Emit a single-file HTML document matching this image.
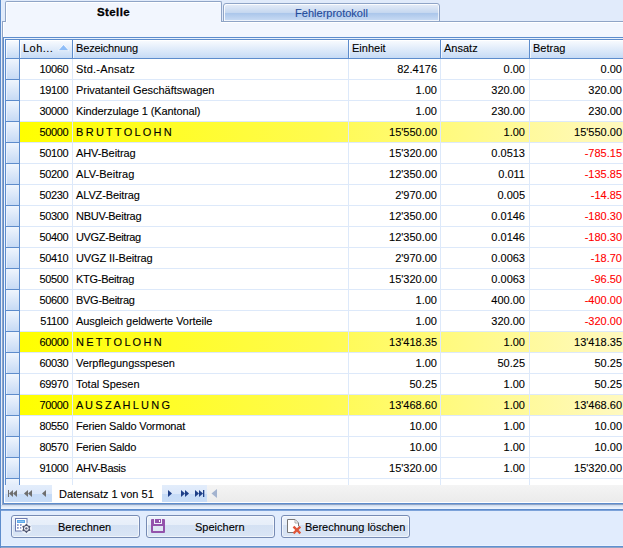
<!DOCTYPE html>
<html><head><meta charset="utf-8"><style>
html,body{margin:0;padding:0}
body{width:623px;height:548px;overflow:hidden;position:relative;background:#e1ebfb;font-family:"Liberation Sans",sans-serif;font-size:11px;color:#000}
.t{position:absolute;white-space:nowrap;line-height:13px;-webkit-text-stroke:0.1px currentColor}
</style></head><body>
<div style="position:absolute;left:0px;top:0px;width:1px;height:548px;background:#5d8ccc"></div><div style="position:absolute;left:1px;top:0px;width:1px;height:509px;background:#e6eefa"></div><div style="position:absolute;left:5px;top:1px;width:215px;height:21px;border:1px solid #8fa4c6;border-bottom:none;border-radius:2px 2px 0 0;background:#f2f6fe;box-shadow:inset 1px 1px 0 #fff"></div><div class="t" style="left:5px;top:6px;width:217px;text-align:center;font-weight:bold;font-size:11.5px;letter-spacing:0.4px;-webkit-text-stroke:0.3px #000">Stelle</div><div style="position:absolute;left:223px;top:3px;width:215px;height:17px;border:1px solid #8fa4c6;border-radius:2px 2px 0 0;border-radius:3px 3px 0 0;background:linear-gradient(#e6edf8 0%,#c6d8f0 50%,#a9c5ea 52%,#cadcf4 100%);box-shadow:inset 1px 1px 0 rgba(255,255,255,0.85),inset -1px -1px 0 rgba(255,255,255,0.7)"></div><div class="t" style="left:223px;top:7px;width:217px;text-align:center;color:#1f4a9a">Fehlerprotokoll</div><div style="position:absolute;left:2px;top:21px;width:3px;height:1px;background:#8fa4c6"></div><div style="position:absolute;left:221px;top:21px;width:402px;height:1px;background:#8fa4c6"></div><div style="position:absolute;left:2px;top:21px;width:1px;height:484px;background:#8fa4c6"></div><div style="position:absolute;left:3px;top:22px;width:620px;height:15px;background:#f2f6fe"></div><div style="position:absolute;left:3px;top:22px;width:1px;height:15px;background:#fff"></div><div style="position:absolute;left:4px;top:22px;width:1px;height:1px;background:#fff"></div><div style="position:absolute;left:221px;top:22px;width:402px;height:1px;background:#fff"></div><div style="position:absolute;left:2px;top:504px;width:621px;height:1px;background:#8fa4c6"></div><div style="position:absolute;left:1px;top:505px;width:622px;height:4px;background:linear-gradient(#c9d8ec,#dce7f5 35%,#eaf1fc 70%,#eff5fd)"></div><div style="position:absolute;left:3px;top:37px;width:620px;height:1px;background:#5d8ccc"></div><div style="position:absolute;left:3px;top:37px;width:1px;height:467px;background:#5d8ccc"></div><div style="position:absolute;left:3px;top:503px;width:620px;height:1px;background:#5d8ccc"></div><div style="position:absolute;left:4px;top:38px;width:619px;height:1px;background:#e8f0fc"></div><div style="position:absolute;left:4px;top:38px;width:1px;height:465px;background:#f0f5fd"></div><div style="position:absolute;left:5px;top:39px;width:618px;height:1px;background:#5d8ccc"></div><div style="position:absolute;left:5px;top:39px;width:1px;height:446px;background:#5d8ccc"></div><div style="position:absolute;left:6px;top:40px;width:617px;height:18px;background:linear-gradient(#fafcff,#c6dbf6)"></div><div style="position:absolute;left:6px;top:40px;width:617px;height:1px;background:#fff"></div><div style="position:absolute;left:5px;top:58px;width:618px;height:1px;background:#5d8ccc"></div><div style="position:absolute;left:19px;top:40px;width:1px;height:18px;background:#5d8ccc"></div><div style="position:absolute;left:20px;top:41px;width:1px;height:17px;background:rgba(255,255,255,0.7)"></div><div style="position:absolute;left:72px;top:40px;width:1px;height:18px;background:#5d8ccc"></div><div style="position:absolute;left:73px;top:41px;width:1px;height:17px;background:rgba(255,255,255,0.7)"></div><div style="position:absolute;left:348px;top:40px;width:1px;height:18px;background:#5d8ccc"></div><div style="position:absolute;left:349px;top:41px;width:1px;height:17px;background:rgba(255,255,255,0.7)"></div><div style="position:absolute;left:440px;top:40px;width:1px;height:18px;background:#5d8ccc"></div><div style="position:absolute;left:441px;top:41px;width:1px;height:17px;background:rgba(255,255,255,0.7)"></div><div style="position:absolute;left:529px;top:40px;width:1px;height:18px;background:#5d8ccc"></div><div style="position:absolute;left:530px;top:41px;width:1px;height:17px;background:rgba(255,255,255,0.7)"></div><div style="position:absolute;left:6px;top:41px;width:1px;height:17px;background:rgba(255,255,255,0.7)"></div><div class="t" style="left:23px;top:42px;letter-spacing:0.45px">Loh...</div><div class="t" style="left:76px;top:42px;letter-spacing:-0.15px">Bezeichnung</div><div class="t" style="left:352px;top:42px;letter-spacing:0px">Einheit</div><div class="t" style="left:444px;top:42px;letter-spacing:0px">Ansatz</div><div class="t" style="left:533px;top:42px;letter-spacing:0px">Betrag</div><svg style="position:absolute;left:57px;top:43px" width="14" height="9"><polyline points="1.5,7.5 6.5,1.5 11.5,7.5" fill="none" stroke="rgba(255,255,255,0.8)" stroke-width="1"/><polygon points="2,7 6.5,2 11,7" fill="#8fbdf7"/></svg><div style="position:absolute;left:6px;top:59px;width:617px;height:426px;overflow:hidden;background:#fff"><div style="position:absolute;left:0px;top:0px;width:13px;height:20px;background:linear-gradient(90deg,#f4f8fe 0,#e2ecfb 1px,#c9dcf6 100%)"></div><div style="position:absolute;left:1px;top:0px;width:12px;height:20px;background:linear-gradient(#eff5fd,#c6daf5)"></div><div style="position:absolute;left:0px;top:20px;width:13px;height:1px;background:#5d8ccc"></div><div style="position:absolute;left:14px;top:20px;width:603px;height:1px;background:#dde9fa"></div><div class="t" style="left:14px;top:4px;width:48.4px;text-align:right;letter-spacing:-0.35px">10060</div><div class="t" style="left:70px;top:4px;letter-spacing:0.190px">Std.-Ansatz</div><div class="t" style="left:343px;top:4px;width:88px;text-align:right">82.4176</div><div class="t" style="left:435px;top:4px;width:84px;text-align:right">0.00</div><div class="t" style="left:524px;top:4px;width:92px;text-align:right;color:#000">0.00</div><div style="position:absolute;left:0px;top:21px;width:13px;height:20px;background:linear-gradient(90deg,#f4f8fe 0,#e2ecfb 1px,#c9dcf6 100%)"></div><div style="position:absolute;left:1px;top:21px;width:12px;height:20px;background:linear-gradient(#eff5fd,#c6daf5)"></div><div style="position:absolute;left:0px;top:41px;width:13px;height:1px;background:#5d8ccc"></div><div style="position:absolute;left:14px;top:41px;width:603px;height:1px;background:#dde9fa"></div><div class="t" style="left:14px;top:25px;width:48.4px;text-align:right;letter-spacing:-0.35px">19100</div><div class="t" style="left:70px;top:25px;letter-spacing:-0.038px">Privatanteil Geschäftswagen</div><div class="t" style="left:343px;top:25px;width:88px;text-align:right">1.00</div><div class="t" style="left:435px;top:25px;width:84px;text-align:right">320.00</div><div class="t" style="left:524px;top:25px;width:92px;text-align:right;color:#000">320.00</div><div style="position:absolute;left:0px;top:42px;width:13px;height:20px;background:linear-gradient(90deg,#f4f8fe 0,#e2ecfb 1px,#c9dcf6 100%)"></div><div style="position:absolute;left:1px;top:42px;width:12px;height:20px;background:linear-gradient(#eff5fd,#c6daf5)"></div><div style="position:absolute;left:0px;top:62px;width:13px;height:1px;background:#5d8ccc"></div><div style="position:absolute;left:14px;top:62px;width:603px;height:1px;background:#dde9fa"></div><div class="t" style="left:14px;top:46px;width:48.4px;text-align:right;letter-spacing:-0.35px">30000</div><div class="t" style="left:70px;top:46px;letter-spacing:-0.117px">Kinderzulage 1 (Kantonal)</div><div class="t" style="left:343px;top:46px;width:88px;text-align:right">1.00</div><div class="t" style="left:435px;top:46px;width:84px;text-align:right">230.00</div><div class="t" style="left:524px;top:46px;width:92px;text-align:right;color:#000">230.00</div><div style="position:absolute;left:0px;top:63px;width:13px;height:20px;background:linear-gradient(90deg,#f4f8fe 0,#e2ecfb 1px,#c9dcf6 100%)"></div><div style="position:absolute;left:1px;top:63px;width:12px;height:20px;background:linear-gradient(#eff5fd,#c6daf5)"></div><div style="position:absolute;left:0px;top:83px;width:13px;height:1px;background:#5d8ccc"></div><div style="position:absolute;left:14px;top:63px;width:603px;height:20px;background:linear-gradient(90deg,#ffff00 0%,#fffb50 50%,#fff9c0 100%)"></div><div style="position:absolute;left:14px;top:83px;width:603px;height:1px;background:#dde9fa"></div><div class="t" style="left:14px;top:67px;width:48.4px;text-align:right;letter-spacing:-0.35px">50000</div><div class="t" style="left:70px;top:67px;letter-spacing:-0.350px">B R U T T O L O H N</div><div class="t" style="left:343px;top:67px;width:88px;text-align:right">15'550.00</div><div class="t" style="left:435px;top:67px;width:84px;text-align:right">1.00</div><div class="t" style="left:524px;top:67px;width:92px;text-align:right;color:#000">15'550.00</div><div style="position:absolute;left:0px;top:84px;width:13px;height:20px;background:linear-gradient(90deg,#f4f8fe 0,#e2ecfb 1px,#c9dcf6 100%)"></div><div style="position:absolute;left:1px;top:84px;width:12px;height:20px;background:linear-gradient(#eff5fd,#c6daf5)"></div><div style="position:absolute;left:0px;top:104px;width:13px;height:1px;background:#5d8ccc"></div><div style="position:absolute;left:14px;top:104px;width:603px;height:1px;background:#dde9fa"></div><div class="t" style="left:14px;top:88px;width:48.4px;text-align:right;letter-spacing:-0.35px">50100</div><div class="t" style="left:70px;top:88px;letter-spacing:-0.080px">AHV-Beitrag</div><div class="t" style="left:343px;top:88px;width:88px;text-align:right">15'320.00</div><div class="t" style="left:435px;top:88px;width:84px;text-align:right">0.0513</div><div class="t" style="left:524px;top:88px;width:92px;text-align:right;color:#ff0000">-785.15</div><div style="position:absolute;left:0px;top:105px;width:13px;height:20px;background:linear-gradient(90deg,#f4f8fe 0,#e2ecfb 1px,#c9dcf6 100%)"></div><div style="position:absolute;left:1px;top:105px;width:12px;height:20px;background:linear-gradient(#eff5fd,#c6daf5)"></div><div style="position:absolute;left:0px;top:125px;width:13px;height:1px;background:#5d8ccc"></div><div style="position:absolute;left:14px;top:125px;width:603px;height:1px;background:#dde9fa"></div><div class="t" style="left:14px;top:109px;width:48.4px;text-align:right;letter-spacing:-0.35px">50200</div><div class="t" style="left:70px;top:109px;letter-spacing:0.040px">ALV-Beitrag</div><div class="t" style="left:343px;top:109px;width:88px;text-align:right">12'350.00</div><div class="t" style="left:435px;top:109px;width:84px;text-align:right">0.011</div><div class="t" style="left:524px;top:109px;width:92px;text-align:right;color:#ff0000">-135.85</div><div style="position:absolute;left:0px;top:126px;width:13px;height:20px;background:linear-gradient(90deg,#f4f8fe 0,#e2ecfb 1px,#c9dcf6 100%)"></div><div style="position:absolute;left:1px;top:126px;width:12px;height:20px;background:linear-gradient(#eff5fd,#c6daf5)"></div><div style="position:absolute;left:0px;top:146px;width:13px;height:1px;background:#5d8ccc"></div><div style="position:absolute;left:14px;top:146px;width:603px;height:1px;background:#dde9fa"></div><div class="t" style="left:14px;top:130px;width:48.4px;text-align:right;letter-spacing:-0.35px">50230</div><div class="t" style="left:70px;top:130px;letter-spacing:-0.127px">ALVZ-Beitrag</div><div class="t" style="left:343px;top:130px;width:88px;text-align:right">2'970.00</div><div class="t" style="left:435px;top:130px;width:84px;text-align:right">0.005</div><div class="t" style="left:524px;top:130px;width:92px;text-align:right;color:#ff0000">-14.85</div><div style="position:absolute;left:0px;top:147px;width:13px;height:20px;background:linear-gradient(90deg,#f4f8fe 0,#e2ecfb 1px,#c9dcf6 100%)"></div><div style="position:absolute;left:1px;top:147px;width:12px;height:20px;background:linear-gradient(#eff5fd,#c6daf5)"></div><div style="position:absolute;left:0px;top:167px;width:13px;height:1px;background:#5d8ccc"></div><div style="position:absolute;left:14px;top:167px;width:603px;height:1px;background:#dde9fa"></div><div class="t" style="left:14px;top:151px;width:48.4px;text-align:right;letter-spacing:-0.35px">50300</div><div class="t" style="left:70px;top:151px;letter-spacing:-0.264px">NBUV-Beitrag</div><div class="t" style="left:343px;top:151px;width:88px;text-align:right">12'350.00</div><div class="t" style="left:435px;top:151px;width:84px;text-align:right">0.0146</div><div class="t" style="left:524px;top:151px;width:92px;text-align:right;color:#ff0000">-180.30</div><div style="position:absolute;left:0px;top:168px;width:13px;height:20px;background:linear-gradient(90deg,#f4f8fe 0,#e2ecfb 1px,#c9dcf6 100%)"></div><div style="position:absolute;left:1px;top:168px;width:12px;height:20px;background:linear-gradient(#eff5fd,#c6daf5)"></div><div style="position:absolute;left:0px;top:188px;width:13px;height:1px;background:#5d8ccc"></div><div style="position:absolute;left:14px;top:188px;width:603px;height:1px;background:#dde9fa"></div><div class="t" style="left:14px;top:172px;width:48.4px;text-align:right;letter-spacing:-0.35px">50400</div><div class="t" style="left:70px;top:172px;letter-spacing:-0.355px">UVGZ-Beitrag</div><div class="t" style="left:343px;top:172px;width:88px;text-align:right">12'350.00</div><div class="t" style="left:435px;top:172px;width:84px;text-align:right">0.0146</div><div class="t" style="left:524px;top:172px;width:92px;text-align:right;color:#ff0000">-180.30</div><div style="position:absolute;left:0px;top:189px;width:13px;height:20px;background:linear-gradient(90deg,#f4f8fe 0,#e2ecfb 1px,#c9dcf6 100%)"></div><div style="position:absolute;left:1px;top:189px;width:12px;height:20px;background:linear-gradient(#eff5fd,#c6daf5)"></div><div style="position:absolute;left:0px;top:209px;width:13px;height:1px;background:#5d8ccc"></div><div style="position:absolute;left:14px;top:209px;width:603px;height:1px;background:#dde9fa"></div><div class="t" style="left:14px;top:193px;width:48.4px;text-align:right;letter-spacing:-0.35px">50410</div><div class="t" style="left:70px;top:193px;letter-spacing:-0.114px">UVGZ II-Beitrag</div><div class="t" style="left:343px;top:193px;width:88px;text-align:right">2'970.00</div><div class="t" style="left:435px;top:193px;width:84px;text-align:right">0.0063</div><div class="t" style="left:524px;top:193px;width:92px;text-align:right;color:#ff0000">-18.70</div><div style="position:absolute;left:0px;top:210px;width:13px;height:20px;background:linear-gradient(90deg,#f4f8fe 0,#e2ecfb 1px,#c9dcf6 100%)"></div><div style="position:absolute;left:1px;top:210px;width:12px;height:20px;background:linear-gradient(#eff5fd,#c6daf5)"></div><div style="position:absolute;left:0px;top:230px;width:13px;height:1px;background:#5d8ccc"></div><div style="position:absolute;left:14px;top:230px;width:603px;height:1px;background:#dde9fa"></div><div class="t" style="left:14px;top:214px;width:48.4px;text-align:right;letter-spacing:-0.35px">50500</div><div class="t" style="left:70px;top:214px;letter-spacing:-0.280px">KTG-Beitrag</div><div class="t" style="left:343px;top:214px;width:88px;text-align:right">15'320.00</div><div class="t" style="left:435px;top:214px;width:84px;text-align:right">0.0063</div><div class="t" style="left:524px;top:214px;width:92px;text-align:right;color:#ff0000">-96.50</div><div style="position:absolute;left:0px;top:231px;width:13px;height:20px;background:linear-gradient(90deg,#f4f8fe 0,#e2ecfb 1px,#c9dcf6 100%)"></div><div style="position:absolute;left:1px;top:231px;width:12px;height:20px;background:linear-gradient(#eff5fd,#c6daf5)"></div><div style="position:absolute;left:0px;top:251px;width:13px;height:1px;background:#5d8ccc"></div><div style="position:absolute;left:14px;top:251px;width:603px;height:1px;background:#dde9fa"></div><div class="t" style="left:14px;top:235px;width:48.4px;text-align:right;letter-spacing:-0.35px">50600</div><div class="t" style="left:70px;top:235px;letter-spacing:-0.280px">BVG-Beitrag</div><div class="t" style="left:343px;top:235px;width:88px;text-align:right">1.00</div><div class="t" style="left:435px;top:235px;width:84px;text-align:right">400.00</div><div class="t" style="left:524px;top:235px;width:92px;text-align:right;color:#ff0000">-400.00</div><div style="position:absolute;left:0px;top:252px;width:13px;height:20px;background:linear-gradient(90deg,#f4f8fe 0,#e2ecfb 1px,#c9dcf6 100%)"></div><div style="position:absolute;left:1px;top:252px;width:12px;height:20px;background:linear-gradient(#eff5fd,#c6daf5)"></div><div style="position:absolute;left:0px;top:272px;width:13px;height:1px;background:#5d8ccc"></div><div style="position:absolute;left:14px;top:272px;width:603px;height:1px;background:#dde9fa"></div><div class="t" style="left:14px;top:256px;width:48.4px;text-align:right;letter-spacing:-0.35px">51100</div><div class="t" style="left:70px;top:256px;letter-spacing:-0.067px">Ausgleich geldwerte Vorteile</div><div class="t" style="left:343px;top:256px;width:88px;text-align:right">1.00</div><div class="t" style="left:435px;top:256px;width:84px;text-align:right">320.00</div><div class="t" style="left:524px;top:256px;width:92px;text-align:right;color:#ff0000">-320.00</div><div style="position:absolute;left:0px;top:273px;width:13px;height:20px;background:linear-gradient(90deg,#f4f8fe 0,#e2ecfb 1px,#c9dcf6 100%)"></div><div style="position:absolute;left:1px;top:273px;width:12px;height:20px;background:linear-gradient(#eff5fd,#c6daf5)"></div><div style="position:absolute;left:0px;top:293px;width:13px;height:1px;background:#5d8ccc"></div><div style="position:absolute;left:14px;top:273px;width:603px;height:20px;background:linear-gradient(90deg,#ffff00 0%,#fffb50 50%,#fff9c0 100%)"></div><div style="position:absolute;left:14px;top:293px;width:603px;height:1px;background:#dde9fa"></div><div class="t" style="left:14px;top:277px;width:48.4px;text-align:right;letter-spacing:-0.35px">60000</div><div class="t" style="left:70px;top:277px;letter-spacing:-0.331px">N E T T O L O H N</div><div class="t" style="left:343px;top:277px;width:88px;text-align:right">13'418.35</div><div class="t" style="left:435px;top:277px;width:84px;text-align:right">1.00</div><div class="t" style="left:524px;top:277px;width:92px;text-align:right;color:#000">13'418.35</div><div style="position:absolute;left:0px;top:294px;width:13px;height:20px;background:linear-gradient(90deg,#f4f8fe 0,#e2ecfb 1px,#c9dcf6 100%)"></div><div style="position:absolute;left:1px;top:294px;width:12px;height:20px;background:linear-gradient(#eff5fd,#c6daf5)"></div><div style="position:absolute;left:0px;top:314px;width:13px;height:1px;background:#5d8ccc"></div><div style="position:absolute;left:14px;top:314px;width:603px;height:1px;background:#dde9fa"></div><div class="t" style="left:14px;top:298px;width:48.4px;text-align:right;letter-spacing:-0.35px">60030</div><div class="t" style="left:70px;top:298px;letter-spacing:-0.047px">Verpflegungsspesen</div><div class="t" style="left:343px;top:298px;width:88px;text-align:right">1.00</div><div class="t" style="left:435px;top:298px;width:84px;text-align:right">50.25</div><div class="t" style="left:524px;top:298px;width:92px;text-align:right;color:#000">50.25</div><div style="position:absolute;left:0px;top:315px;width:13px;height:20px;background:linear-gradient(90deg,#f4f8fe 0,#e2ecfb 1px,#c9dcf6 100%)"></div><div style="position:absolute;left:1px;top:315px;width:12px;height:20px;background:linear-gradient(#eff5fd,#c6daf5)"></div><div style="position:absolute;left:0px;top:335px;width:13px;height:1px;background:#5d8ccc"></div><div style="position:absolute;left:14px;top:335px;width:603px;height:1px;background:#dde9fa"></div><div class="t" style="left:14px;top:319px;width:48.4px;text-align:right;letter-spacing:-0.35px">69970</div><div class="t" style="left:70px;top:319px;letter-spacing:0.000px">Total Spesen</div><div class="t" style="left:343px;top:319px;width:88px;text-align:right">50.25</div><div class="t" style="left:435px;top:319px;width:84px;text-align:right">1.00</div><div class="t" style="left:524px;top:319px;width:92px;text-align:right;color:#000">50.25</div><div style="position:absolute;left:0px;top:336px;width:13px;height:20px;background:linear-gradient(90deg,#f4f8fe 0,#e2ecfb 1px,#c9dcf6 100%)"></div><div style="position:absolute;left:1px;top:336px;width:12px;height:20px;background:linear-gradient(#eff5fd,#c6daf5)"></div><div style="position:absolute;left:0px;top:356px;width:13px;height:1px;background:#5d8ccc"></div><div style="position:absolute;left:14px;top:336px;width:603px;height:20px;background:linear-gradient(90deg,#ffff00 0%,#fffb50 50%,#fff9c0 100%)"></div><div style="position:absolute;left:14px;top:356px;width:603px;height:1px;background:#dde9fa"></div><div class="t" style="left:14px;top:340px;width:48.4px;text-align:right;letter-spacing:-0.35px">70000</div><div class="t" style="left:70px;top:340px;letter-spacing:-0.356px">A U S Z A H L U N G</div><div class="t" style="left:343px;top:340px;width:88px;text-align:right">13'468.60</div><div class="t" style="left:435px;top:340px;width:84px;text-align:right">1.00</div><div class="t" style="left:524px;top:340px;width:92px;text-align:right;color:#000">13'468.60</div><div style="position:absolute;left:0px;top:357px;width:13px;height:20px;background:linear-gradient(90deg,#f4f8fe 0,#e2ecfb 1px,#c9dcf6 100%)"></div><div style="position:absolute;left:1px;top:357px;width:12px;height:20px;background:linear-gradient(#eff5fd,#c6daf5)"></div><div style="position:absolute;left:0px;top:377px;width:13px;height:1px;background:#5d8ccc"></div><div style="position:absolute;left:14px;top:377px;width:603px;height:1px;background:#dde9fa"></div><div class="t" style="left:14px;top:361px;width:48.4px;text-align:right;letter-spacing:-0.35px">80550</div><div class="t" style="left:70px;top:361px;letter-spacing:-0.160px">Ferien Saldo Vormonat</div><div class="t" style="left:343px;top:361px;width:88px;text-align:right">10.00</div><div class="t" style="left:435px;top:361px;width:84px;text-align:right">1.00</div><div class="t" style="left:524px;top:361px;width:92px;text-align:right;color:#000">10.00</div><div style="position:absolute;left:0px;top:378px;width:13px;height:20px;background:linear-gradient(90deg,#f4f8fe 0,#e2ecfb 1px,#c9dcf6 100%)"></div><div style="position:absolute;left:1px;top:378px;width:12px;height:20px;background:linear-gradient(#eff5fd,#c6daf5)"></div><div style="position:absolute;left:0px;top:398px;width:13px;height:1px;background:#5d8ccc"></div><div style="position:absolute;left:14px;top:398px;width:603px;height:1px;background:#dde9fa"></div><div class="t" style="left:14px;top:382px;width:48.4px;text-align:right;letter-spacing:-0.35px">80570</div><div class="t" style="left:70px;top:382px;letter-spacing:-0.182px">Ferien Saldo</div><div class="t" style="left:343px;top:382px;width:88px;text-align:right">10.00</div><div class="t" style="left:435px;top:382px;width:84px;text-align:right">1.00</div><div class="t" style="left:524px;top:382px;width:92px;text-align:right;color:#000">10.00</div><div style="position:absolute;left:0px;top:399px;width:13px;height:20px;background:linear-gradient(90deg,#f4f8fe 0,#e2ecfb 1px,#c9dcf6 100%)"></div><div style="position:absolute;left:1px;top:399px;width:12px;height:20px;background:linear-gradient(#eff5fd,#c6daf5)"></div><div style="position:absolute;left:0px;top:419px;width:13px;height:1px;background:#5d8ccc"></div><div style="position:absolute;left:14px;top:419px;width:603px;height:1px;background:#dde9fa"></div><div class="t" style="left:14px;top:403px;width:48.4px;text-align:right;letter-spacing:-0.35px">91000</div><div class="t" style="left:70px;top:403px;letter-spacing:-0.325px">AHV-Basis</div><div class="t" style="left:343px;top:403px;width:88px;text-align:right">15'320.00</div><div class="t" style="left:435px;top:403px;width:84px;text-align:right">1.00</div><div class="t" style="left:524px;top:403px;width:92px;text-align:right;color:#000">15'320.00</div><div style="position:absolute;left:0px;top:420px;width:13px;height:20px;background:linear-gradient(90deg,#f4f8fe 0,#e2ecfb 1px,#c9dcf6 100%)"></div><div style="position:absolute;left:1px;top:420px;width:12px;height:20px;background:linear-gradient(#eff5fd,#c6daf5)"></div><div style="position:absolute;left:0px;top:440px;width:13px;height:1px;background:#5d8ccc"></div><div style="position:absolute;left:14px;top:440px;width:603px;height:1px;background:#dde9fa"></div><div class="t" style="left:14px;top:424px;width:48.4px;text-align:right;letter-spacing:-0.35px">91100</div><div class="t" style="left:70px;top:424px;letter-spacing:0.000px">ALV-Basis</div><div class="t" style="left:343px;top:424px;width:88px;text-align:right">15'320.00</div><div class="t" style="left:435px;top:424px;width:84px;text-align:right">1.00</div><div class="t" style="left:524px;top:424px;width:92px;text-align:right;color:#000">15'320.00</div><div style="position:absolute;left:66px;top:0px;width:1px;height:426px;background:#dde9fa"></div><div style="position:absolute;left:342px;top:0px;width:1px;height:426px;background:#dde9fa"></div><div style="position:absolute;left:434px;top:0px;width:1px;height:426px;background:#dde9fa"></div><div style="position:absolute;left:523px;top:0px;width:1px;height:426px;background:#dde9fa"></div><div style="position:absolute;left:13px;top:0px;width:1px;height:426px;background:#5d8ccc"></div></div><div style="position:absolute;left:4px;top:485px;width:619px;height:17px;background:#fff"></div><div style="position:absolute;left:4px;top:502px;width:619px;height:1px;background:#fff"></div><div style="position:absolute;left:5px;top:485px;width:47px;height:17px;background:linear-gradient(#e3edfb 0%,#dce8fa 50%,#c6dbf7 52%,#c9ddf7 100%)"></div><div style="position:absolute;left:162px;top:485px;width:45px;height:17px;background:linear-gradient(#e3edfb 0%,#dce8fa 50%,#c6dbf7 52%,#c9ddf7 100%)"></div><div style="position:absolute;left:207px;top:485px;width:416px;height:17px;background:linear-gradient(#f4f4f4,#ebebeb)"></div><div class="t" style="left:59px;top:488px">Datensatz 1 von 51</div><svg style="position:absolute;left:0;top:485px" width="230" height="17">
<g fill="#6e6e6e">
<rect x="8" y="5" width="1" height="7"/><polygon points="9,8.5 13,5 13,12"/><polygon points="13,8.5 17,5 17,12"/>
<polygon points="24,8.5 28,5 28,12"/><polygon points="28,8.5 32,5 32,12"/>
<polygon points="42,8.5 46,5 46,12"/>
</g>
<g fill="#1f3f88">
<polygon points="168,5 172,8.5 168,12"/>
<polygon points="181,5 185,8.5 181,12"/><polygon points="185,5 189,8.5 185,12"/>
<polygon points="195,5 199,8.5 195,12"/><polygon points="199,5 203,8.5 199,12"/><rect x="203" y="5" width="1.3" height="7"/>
</g>
<polygon points="211.5,8.5 217,4 217,13" fill="#a3b3cf"/>
</svg><div style="position:absolute;left:1px;top:509px;width:622px;height:1px;background:#5d8ccc"></div><div style="position:absolute;left:1px;top:510px;width:622px;height:1px;background:#7ca2d9"></div><div style="position:absolute;left:1px;top:511px;width:622px;height:34px;background:#e1ecfd"></div><div style="position:absolute;left:1px;top:545px;width:622px;height:1px;background:#eaf2fe"></div><div style="position:absolute;left:1px;top:546px;width:622px;height:1px;background:#6090d0"></div><div style="position:absolute;left:1px;top:547px;width:622px;height:1px;background:#90a4c8"></div><div style="position:absolute;left:11px;top:515px;width:127px;height:21px;border:1px solid #768bb4;border-radius:3px;background:linear-gradient(#ecf2fb 0%,#e6eef9 42%,#d4e1f3 43%,#dae5f5 100%);box-shadow:inset 1px 1px 0 rgba(255,255,255,0.6),inset -1px -1px 0 rgba(255,255,255,0.6)"></div><svg style="position:absolute;left:14px;top:517px" width="20" height="18">
<rect x="1.5" y="1.5" width="11.5" height="12.5" fill="#fff" stroke="#6b7bb0"/>
<rect x="3" y="3" width="8" height="3" fill="#5ea8e8"/>
<rect x="4" y="4" width="6" height="1" fill="#8cc4f2"/>
<rect x="3" y="7.2" width="1.7" height="1.6" fill="#7a88c0"/><rect x="6" y="7.2" width="1.7" height="1.6" fill="#7a88c0"/>
<rect x="3" y="10.1" width="1.7" height="1.6" fill="#7a88c0"/><rect x="6" y="10.1" width="1.7" height="1.6" fill="#7a88c0"/>
<g transform="translate(12.4,11.4)"><circle r="5.6" fill="rgba(255,255,255,0.6)"/><polygon points="0.00,-4.80 -1.65,-2.86 -4.16,-2.40 -3.30,-0.00 -4.16,2.40 -1.65,2.86 -0.00,4.80 1.65,2.86 4.16,2.40 3.30,0.00 4.16,-2.40 1.65,-2.86" fill="#4e5470"/><circle r="2.3" fill="#fff"/><circle r="1.2" fill="#5a6080"/></g>
</svg><div class="t" style="left:58px;top:521px">Berechnen</div><div style="position:absolute;left:146px;top:515px;width:127px;height:21px;border:1px solid #768bb4;border-radius:3px;background:linear-gradient(#ecf2fb 0%,#e6eef9 42%,#d4e1f3 43%,#dae5f5 100%);box-shadow:inset 1px 1px 0 rgba(255,255,255,0.6),inset -1px -1px 0 rgba(255,255,255,0.6)"></div><svg style="position:absolute;left:151px;top:519px" width="14" height="14">
<rect x="0" y="0" width="14" height="14" rx="1" fill="#9353ab"/>
<rect x="3" y="0" width="8" height="5" fill="#eef2fa"/>
<rect x="4" y="0" width="6" height="4" fill="#9353ab"/>
<rect x="8" y="1" width="1" height="2" fill="#fff"/>
<rect x="2" y="7" width="10" height="5" fill="#dfe7f3"/>
</svg><div class="t" style="left:195px;top:521px">Speichern</div><div style="position:absolute;left:281px;top:515px;width:127px;height:21px;border:1px solid #768bb4;border-radius:3px;background:linear-gradient(#ecf2fb 0%,#e6eef9 42%,#d4e1f3 43%,#dae5f5 100%);box-shadow:inset 1px 1px 0 rgba(255,255,255,0.6),inset -1px -1px 0 rgba(255,255,255,0.6)"></div><svg style="position:absolute;left:286px;top:518px" width="17" height="17">
<path d="M7,14.5 H1.5 V1.5 H9 L12.5,5 V8" fill="#fff" stroke="#767676"/>
<path d="M2,2 H9 L12,5 V9 L8,14 H2 Z" fill="#fff"/>
<path d="M9,1.5 V5 H12.5" fill="none" stroke="#9a9a9a" stroke-width="0.8"/>
<g stroke="#e0573a" stroke-width="2.3" stroke-linecap="square"><line x1="8.3" y1="9.4" x2="13.5" y2="14.6"/><line x1="13.5" y1="9.4" x2="8.3" y2="14.6"/></g>
<rect x="9.9" y="11" width="2" height="2" fill="#e0573a"/>
</svg><div class="t" style="left:305px;top:521px">Berechnung löschen</div>
</body></html>
